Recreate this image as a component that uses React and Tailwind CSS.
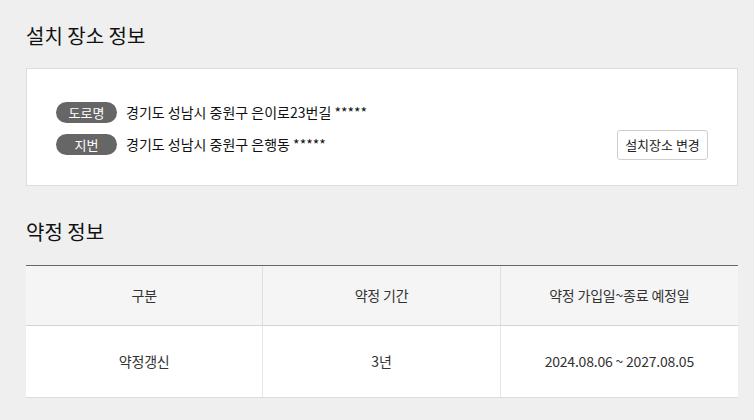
export default function App() {
  const font = { fontFamily: '"Noto Sans CJK KR", "Noto Sans", sans-serif' };
  return (
    <div style={font} className="w-[754px] h-[420px] bg-[#efefef] px-[26px] pt-[21px] text-[#111]">
      <h2 className="text-[20px] leading-[29px] font-normal">설치 장소 정보</h2>
      <div className="mt-[18px] w-[712px] h-[118px] bg-white border border-[#dcdcdc] flex items-end justify-between pl-[29px] pr-[29px] pb-[25px]">
        <div className="flex flex-col gap-[11px] mb-[5px]">
          <div className="flex items-center gap-[9px]">
            <span className="w-[61px] h-[21px] rounded-full bg-[#666] text-white text-[13px] flex items-center justify-center">도로명</span>
            <span className="text-[14px]">경기도 성남시 중원구 은이로23번길 *****</span>
          </div>
          <div className="flex items-center gap-[9px]">
            <span className="w-[61px] h-[21px] rounded-full bg-[#666] text-white text-[13px] flex items-center justify-center">지번</span>
            <span className="text-[14px]">경기도 성남시 중원구 은행동 *****</span>
          </div>
        </div>
        <button className="w-[91px] h-[30px] bg-white border border-[#cfcfcf] rounded-[3px] text-[13px] text-[#222]">설치장소 변경</button>
      </div>
      <h2 className="mt-[31px] text-[20px] leading-[29px] font-normal">약정 정보</h2>
      <div className="mt-[19px] w-[712px] border-t border-[#666] border-b border-b-[#dcdcdc]">
        <div className="grid grid-cols-3 h-[60px] bg-[#f5f5f5] border-b border-[#d4d4d4] text-[14px] text-[#333] tracking-[-0.2px]">
          <div className="flex items-center justify-center border-r border-[#e0e0e0]">구분</div>
          <div className="flex items-center justify-center border-r border-[#e0e0e0]">약정 기간</div>
          <div className="flex items-center justify-center">약정 가입일~종료 예정일</div>
        </div>
        <div className="grid grid-cols-3 h-[71px] bg-white text-[14px] text-[#333] tracking-[-0.2px]">
          <div className="flex items-center justify-center border-r border-[#e6e6e6]">약정갱신</div>
          <div className="flex items-center justify-center border-r border-[#e6e6e6]">3년</div>
          <div className="flex items-center justify-center">2024.08.06 ~ 2027.08.05</div>
        </div>
      </div>
    </div>
  );
}
